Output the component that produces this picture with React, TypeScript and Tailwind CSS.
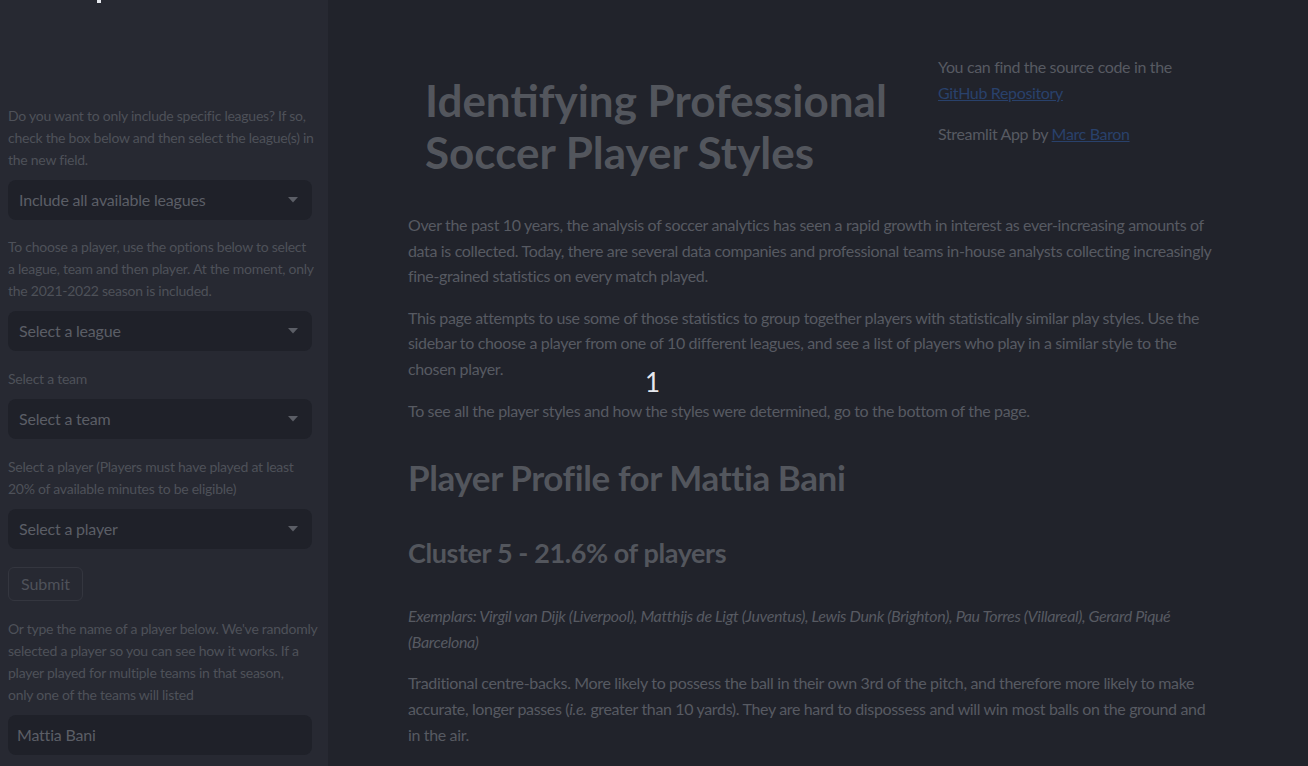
const font = "font-['Lato','Liberation_Sans',sans-serif]";

function SelectBox({ text }: { text: string }) {
  return (
    <div className="flex h-10 items-center justify-between rounded-lg bg-[#1f2129] pl-[11px] pr-[14px]">
      <span className="text-base tracking-[-0.2px] text-[#5b5e66]">{text}</span>
      <svg width="10" height="6" viewBox="0 0 10 6" aria-hidden>
        <path d="M0 0 L10 0 L5 5.5 Z" fill="#5b5e66" />
      </svg>
    </div>
  );
}

function Sidebar() {
  const note = "whitespace-nowrap text-sm leading-[22px] tracking-[-0.25px] text-[#4e5159]";
  return (
    <aside className="w-[328px] shrink-0 bg-[#272932] pl-2 pr-4 pt-[105px]">
      <p className={note}>
        Do you want to only include specific leagues? If so,
        <br />
        check the box below and then select the league(s) in
        <br />
        the new field.
      </p>
      <div className="mt-[9px]">
        <SelectBox text="Include all available leagues" />
      </div>
      <p className={`mt-[16px] ${note}`}>
        To choose a player, use the options below to select
        <br />
        a league, team and then player. At the moment, only
        <br />
        the 2021-2022 season is included.
      </p>
      <div className="mt-[9px]">
        <SelectBox text="Select a league" />
      </div>
      <p className={`mt-[17px] ${note}`}>Select a team</p>
      <div className="mt-[9px]">
        <SelectBox text="Select a team" />
      </div>
      <p className={`mt-[17px] ${note}`}>
        Select a player (Players must have played at least
        <br />
        20% of available minutes to be eligible)
      </p>
      <div className="mt-[9px]">
        <SelectBox text="Select a player" />
      </div>
      <button
        type="button"
        className="mt-[18px] h-[34px] w-[75px] rounded-md border border-[#34363f] text-base text-[#4f525a]"
      >
        Submit
      </button>
      <p className={`mt-[17px] ${note}`}>
        Or type the name of a player below. We&apos;ve randomly
        <br />
        selected a player so you can see how it works. If a
        <br />
        player played for multiple teams in that season,
        <br />
        only one of the teams will listed
      </p>
      <div className="mt-[9px] flex h-10 items-center rounded-lg bg-[#1f2129] pl-[9px]">
        <span className="text-base tracking-[-0.2px] text-[#5b5e66]">Mattia Bani</span>
      </div>
    </aside>
  );
}

function Main() {
  const body = "whitespace-nowrap text-base leading-[25.6px] tracking-[-0.35px] text-[#575a62]";
  return (
    <main className="flex-1 pl-[80px] pr-[80px] pt-[52px]">
      <div className="w-[820px]">
        <div className="flex">
          <div className="w-[530px] pl-[17px] pt-[22px]">
            <h1 className="text-[44px] font-bold leading-[52px] text-[#53565d]">
              Identifying Professional
              <br />
              Soccer Player Styles
            </h1>
          </div>
          <div className={body}>
            <p className="pt-[2px]">
              You can find the source code in the
              <br />
              <span className="text-[#29416b] underline">GitHub Repository</span>
            </p>
            <p className="mt-4">
              Streamlit App by <span className="text-[#29416b] underline">Marc Baron</span>
            </p>
          </div>
        </div>

        <div className="mt-[34px]">
          <p className={body}>
            Over the past 10 years, the analysis of soccer analytics has seen a rapid growth in interest as ever-increasing amounts of
            <br />
            data is collected. Today, there are several data companies and professional teams in-house analysts collecting increasingly
            <br />
            fine-grained statistics on every match played.
          </p>
          <p className={`mt-4 ${body}`}>
            This page attempts to use some of those statistics to group together players with statistically similar play styles. Use the
            <br />
            sidebar to choose a player from one of 10 different leagues, and see a list of players who play in a similar style to the
            <br />
            chosen player.
          </p>
          <p className={`mt-4 ${body}`}>
            To see all the player styles and how the styles were determined, go to the bottom of the page.
          </p>
        </div>

        <h2 className="mt-[32px] text-[35px] font-bold leading-[44px] tracking-[-0.4px] text-[#53565d]">
          Player Profile for Mattia Bani
        </h2>
        <h3 className="mt-[36px] text-[27px] font-bold leading-[36px] tracking-[-0.4px] text-[#53565d]">
          Cluster 5 - 21.6% of players
        </h3>

        <div className="mt-[32px]">
          <p className={`italic ${body}`}>
            Exemplars: Virgil van Dijk (Liverpool), Matthijs de Ligt (Juventus), Lewis Dunk (Brighton), Pau Torres (Villareal), Gerard Piqué
            <br />
            (Barcelona)
          </p>
          <p className={`mt-4 ${body}`}>
            Traditional centre-backs. More likely to possess the ball in their own 3rd of the pitch, and therefore more likely to make
            <br />
            accurate, longer passes (<i>i.e.</i> greater than 10 yards). They are hard to dispossess and will win most balls on the ground and
            <br />
            in the air.
          </p>
        </div>
      </div>
    </main>
  );
}

export default function App() {
  return (
    <div className={`relative flex h-[766px] w-[1308px] overflow-hidden bg-[#21232b] ${font}`}>
      <Sidebar />
      <Main />
      <span className="absolute left-[645px] top-[369px] text-[26px] leading-none text-[#e6e8ee]">1</span>
      <span className="absolute left-[97px] top-0 h-[3px] w-[4px] bg-[#e6e8ee]" />
    </div>
  );
}
